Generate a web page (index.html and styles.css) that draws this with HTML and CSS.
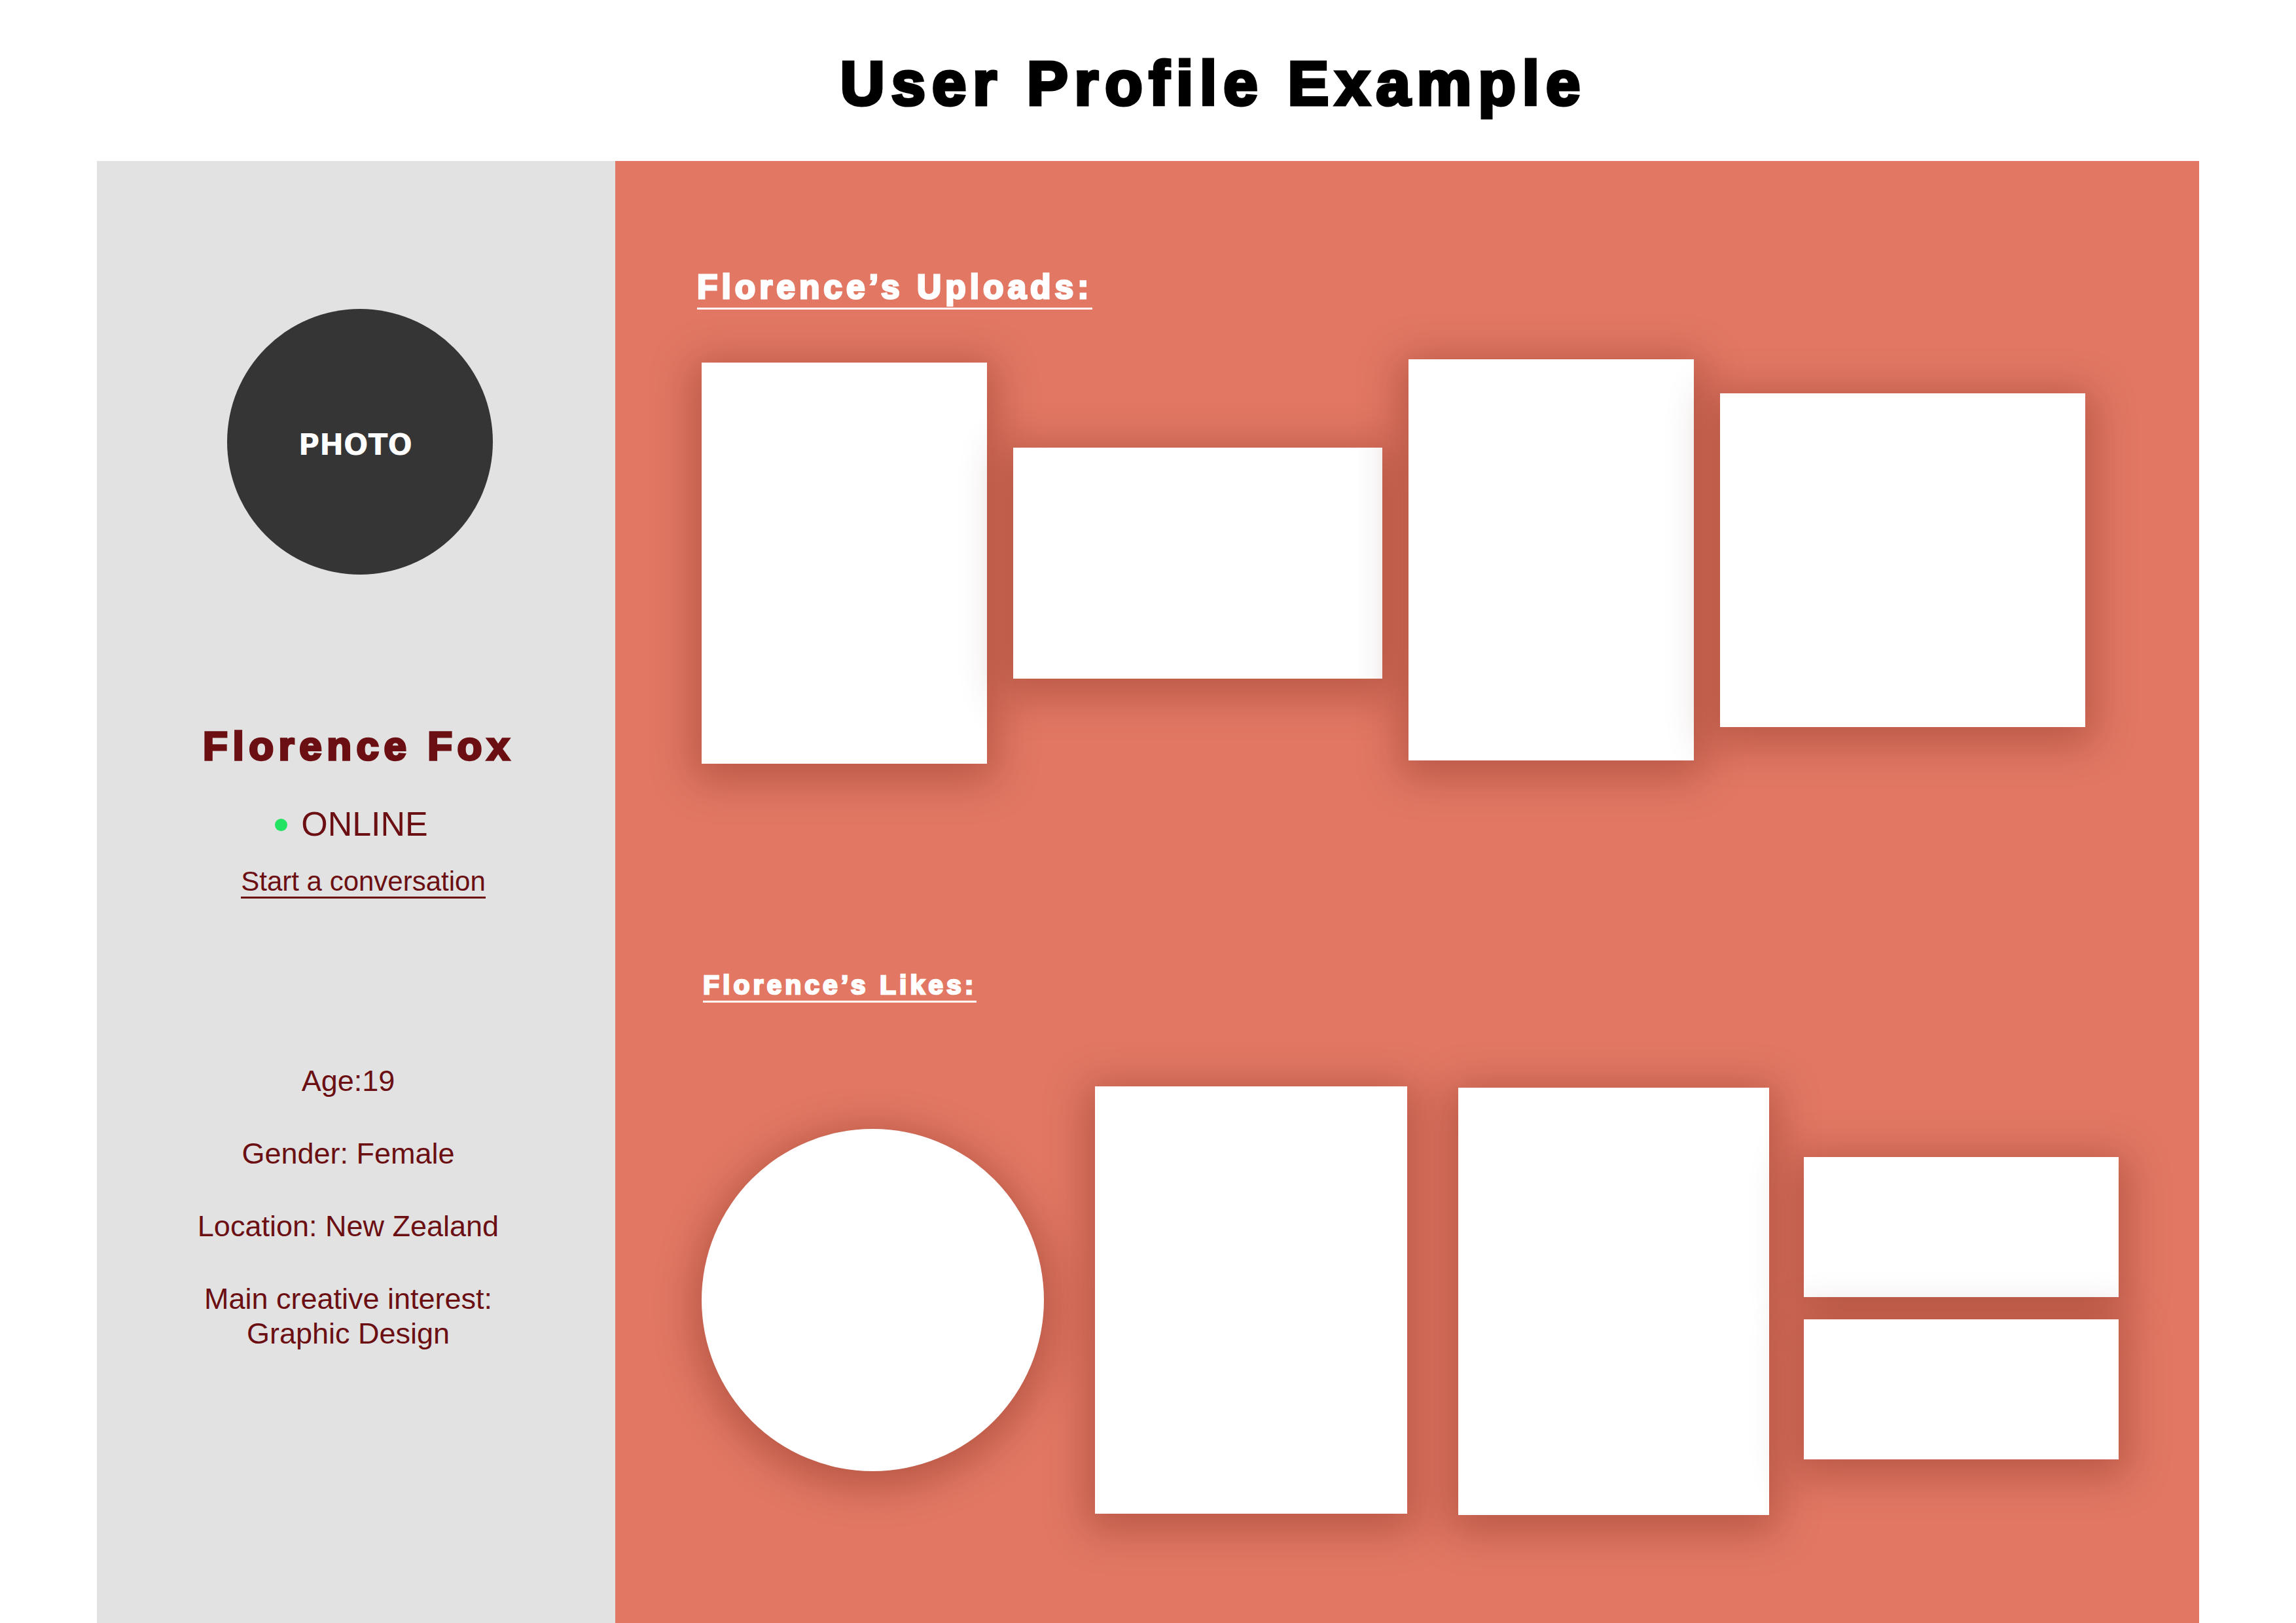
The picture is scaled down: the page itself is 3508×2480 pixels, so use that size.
FILE: index.html
```html
<!DOCTYPE html>
<html lang="en">
<head>
<meta charset="utf-8">
<title>User Profile Example</title>
<link rel="stylesheet" href="styles.css">
</head>
<body>
  <h1 class="page-title">User Profile Example</h1>
  <div class="profile">
    <aside class="sidebar">
      <div class="photo"><span class="photo-label">PHOTO</span></div>
      <h2 class="name">Florence Fox</h2>
      <div class="status"><span class="status-dot"></span><span class="status-text">ONLINE</span></div>
      <a class="chat-link" href="#">Start a conversation</a>
      <div class="details">
        <p class="detail">Age:19</p>
        <p class="detail">Gender: Female</p>
        <p class="detail">Location: New Zealand</p>
        <p class="detail">Main creative interest:<br>Graphic Design</p>
      </div>
    </aside>
    <main class="content">
      <h3 class="section-title uploads-title"><span class="ul">Florence’s Uploads:</span></h3>
      <div class="gallery uploads">
        <div class="tile up-1"></div>
        <div class="tile up-2"></div>
        <div class="tile up-3"></div>
        <div class="tile up-4"></div>
      </div>
      <h3 class="section-title likes-title"><span class="ul">Florence’s Likes:</span></h3>
      <div class="gallery likes">
        <div class="tile like-circle"></div>
        <div class="tile like-2"></div>
        <div class="tile like-3"></div>
        <div class="stack">
          <div class="tile like-small"></div>
          <div class="tile like-small"></div>
        </div>
      </div>
    </main>
  </div>
</body>
</html>
```

FILE: styles.css
```css
html, body {
  margin: 0;
  padding: 0;
  background: #ffffff;
}

body {
  font-family: "Liberation Sans", Arial, sans-serif;
  height: 2480px;
  overflow: hidden;
}

.page-title {
  margin: 81px 0 71px;
  padding-left: 200px;
  text-align: center;
  font-size: 94px;
  line-height: 1;
  font-weight: 700;
  letter-spacing: 10px;
  color: #000000;
  -webkit-text-stroke: 5px #000000;
}

.profile {
  display: flex;
  margin: 0 148px;
  height: 2234px;
}

.sidebar {
  width: 792px;
  flex: none;
  background: #e2e2e2;
  display: flex;
  flex-direction: column;
  align-items: center;
  padding-top: 226px;
  color: #6b0f13;
}

.photo {
  width: 406px;
  height: 406px;
  border-radius: 50%;
  background: #353535;
  display: flex;
  align-items: center;
  justify-content: center;
  margin-left: 12px;
}

.photo-label {
  font-family: "DejaVu Sans", Verdana, sans-serif;
  font-weight: 700;
  font-size: 44px;
  color: #ffffff;
  margin-top: 8px;
  margin-left: -14px;
}

.name {
  margin: 231px 0 0;
  font-size: 62px;
  line-height: 1;
  font-weight: 700;
  letter-spacing: 7.5px;
  -webkit-text-stroke: 3.5px #6b0f13;
  padding-left: 8px;
}

.status {
  margin-top: 62px;
  display: flex;
  align-items: center;
  gap: 21px;
  margin-right: 14px;
}

.status-dot {
  width: 19px;
  height: 19px;
  border-radius: 50%;
  background: #23e462;
  margin-top: 2px;
}

.status-text {
  font-size: 52px;
  line-height: 1;
}

.chat-link {
  margin-top: 41px;
  font-size: 42px;
  line-height: 1;
  color: #6b0f13;
  text-decoration: none;
  padding-bottom: 2px;
  border-bottom: 3px solid #6b0f13;
  margin-left: 22px;
}

.details {
  margin-top: 252px;
  padding-right: 24px;
  display: flex;
  flex-direction: column;
  gap: 58px;
  text-align: center;
}

.detail {
  margin: 0;
  font-size: 45px;
  line-height: 53px;
}

.content {
  flex: 1;
  background: #e27864;
  padding: 167px 0 0 125px;
  display: flex;
  flex-direction: column;
  align-items: flex-start;
}

.section-title {
  margin: 0;
  font-weight: 700;
  line-height: 1;
  color: #ffffff;
}

.section-title .ul {
  display: inline-block;
  border-bottom: 3px solid #ffffff;
}

.uploads-title {
  font-size: 51.5px;
  letter-spacing: 6px;
  -webkit-text-stroke: 3px #ffffff;
}

.uploads-title .ul {
  padding-bottom: 5px;
}

.likes-title {
  font-size: 41px;
  letter-spacing: 5px;
  -webkit-text-stroke: 2.5px #ffffff;
  margin-top: 318px;
  margin-left: 9px;
}

.likes-title .ul {
  padding-bottom: 3px;
}

.gallery {
  display: flex;
  align-items: center;
  margin-left: 7px;
}

.uploads {
  margin-top: 81px;
  gap: 40px;
}

.likes {
  margin-top: 126px;
}

.tile {
  background: #ffffff;
  box-shadow: 0 12px 60px 14px rgba(90, 15, 0, 0.3);
  flex: none;
}

.up-1 { width: 436px; height: 613px; }
.up-2 { width: 564px; height: 353px; }
.up-3 { width: 436px; height: 613px; margin-top: -10px; }
.up-4 { width: 558px; height: 510px; margin-top: -8px; }

.like-circle {
  width: 523px;
  height: 523px;
  border-radius: 50%;
}

.like-2 { width: 477px; height: 653px; margin-left: 78px; }
.like-3 { width: 475px; height: 653px; margin-left: 78px; margin-top: 4px; }

.stack {
  margin-left: 53px;
  display: flex;
  flex-direction: column;
  gap: 34px;
  margin-top: 26px;
}

.like-small { width: 481px; height: 214px; }
```
